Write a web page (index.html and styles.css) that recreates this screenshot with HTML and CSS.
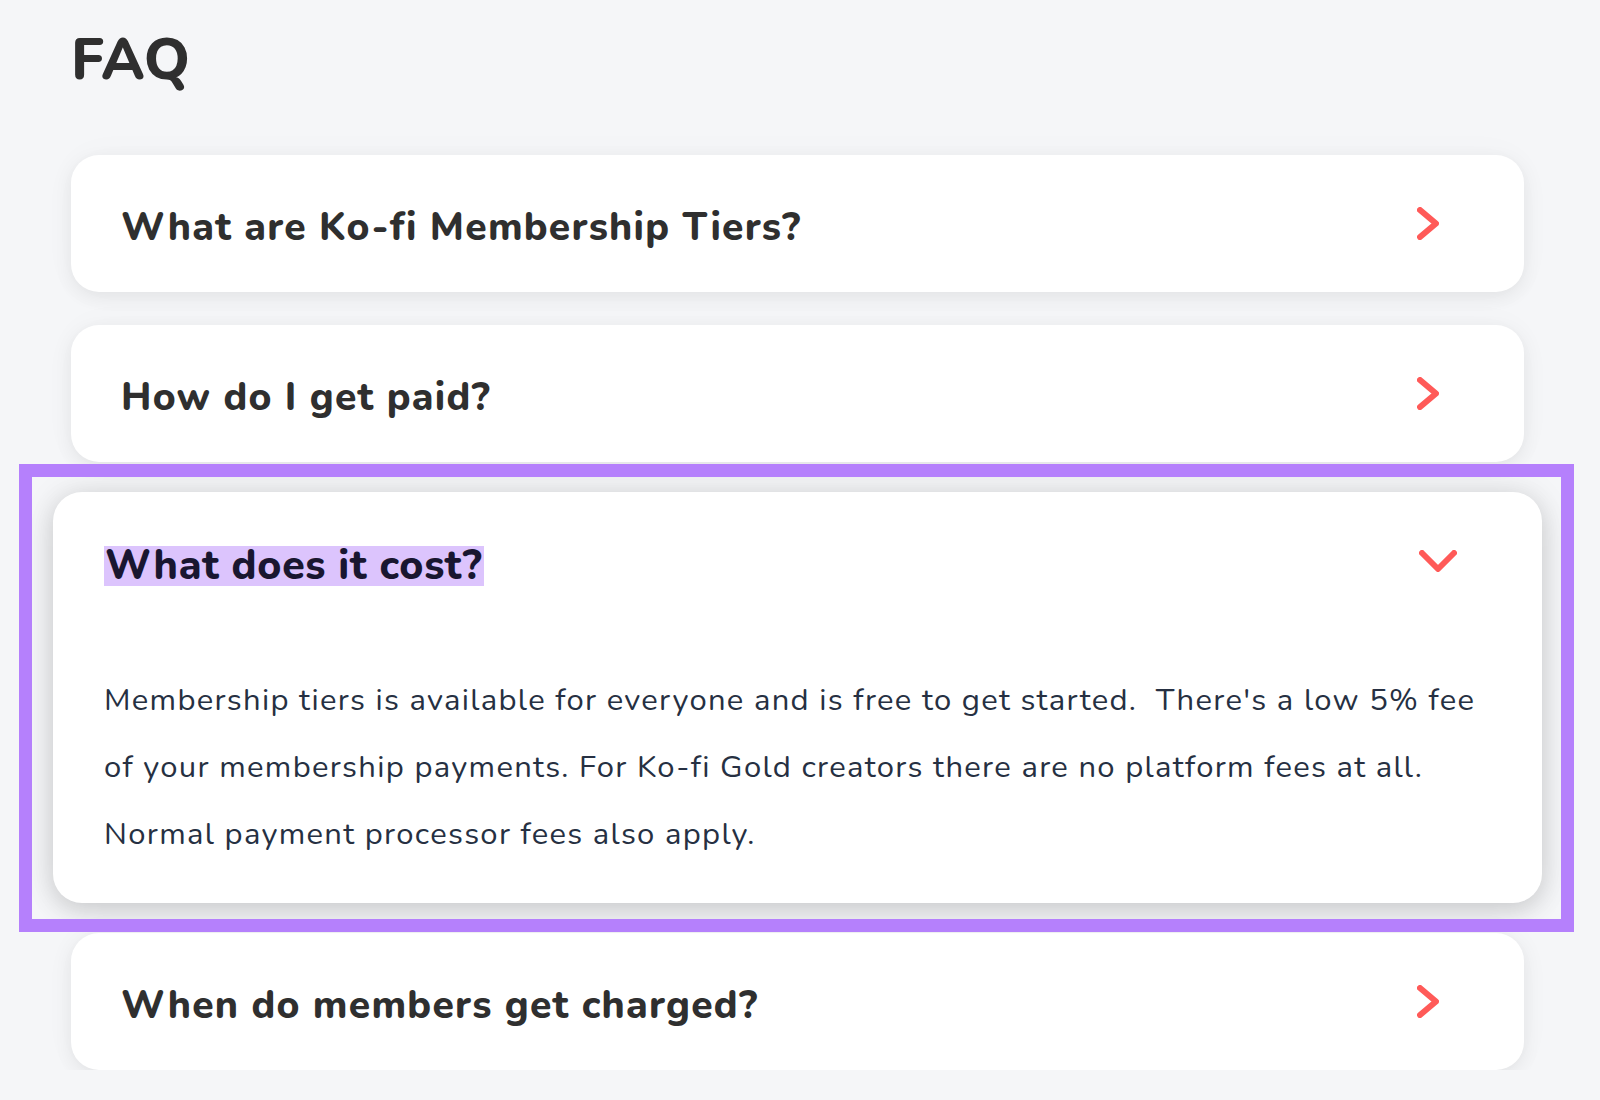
FILE: index.html
```html
<!DOCTYPE html>
<html lang="en">
<head>
<meta charset="utf-8">
<title>FAQ</title>
<link rel="stylesheet" href="styles.css">
</head>
<body>
<main class="page">
  <h1 class="faq-title">FAQ</h1>
  <div class="faq-list">
    <div class="faq-card">
      <span class="faq-q">What are Ko-fi Membership Tiers?</span>
      <svg class="chev-right" width="22" height="33" viewBox="0 0 22 33"><path d="M3 3 L19 16.5 L3 30" fill="none" stroke="#ff5a58" stroke-width="6" stroke-linecap="round" stroke-linejoin="round"/></svg>
    </div>
    <div class="faq-card">
      <span class="faq-q">How do I get paid?</span>
      <svg class="chev-right" width="22" height="33" viewBox="0 0 22 33"><path d="M3 3 L19 16.5 L3 30" fill="none" stroke="#ff5a58" stroke-width="6" stroke-linecap="round" stroke-linejoin="round"/></svg>
    </div>
    <div class="faq-open-wrap">
      <div class="faq-card-open">
        <div class="faq-open-head">
          <span class="faq-q-open">What does it cost?</span>
          <svg class="chev-down" width="38" height="22" viewBox="0 0 38 22"><path d="M3 3 L19 19 L35 3" fill="none" stroke="#ff5a58" stroke-width="6" stroke-linecap="round" stroke-linejoin="round"/></svg>
        </div>
        <p class="faq-answer">Membership tiers is available for everyone and is free to get started.&nbsp; There's a low 5% fee<br>of your membership payments. For Ko-fi Gold creators there are no platform fees at all.<br>Normal payment processor fees also apply.</p>
      </div>
      <div class="select-frame"></div>
    </div>
    <div class="faq-card">
      <span class="faq-q">When do members get charged?</span>
      <svg class="chev-right" width="22" height="33" viewBox="0 0 22 33"><path d="M3 3 L19 16.5 L3 30" fill="none" stroke="#ff5a58" stroke-width="6" stroke-linecap="round" stroke-linejoin="round"/></svg>
    </div>
  </div>
</main>
</body>
</html>
```
FILE: styles.css
```css
html, body {
  margin: 0;
  padding: 0;
  background: #f5f6f8;
}
body {
  font-family: "Nunito", "Lato", "Noto Sans", sans-serif;
  color: #2f2f2f;
}
.page {
  padding: 25px 0 0 71px;
  width: 1453px;
}
.faq-title {
  margin: 0 0 60px 0;
  font-size: 58px;
  line-height: 1.2;
  font-weight: 800;
  color: #2f2f2f;
}
.faq-list {
  display: flex;
  flex-direction: column;
  gap: 33px;
}
.faq-card {
  height: 137px;
  box-sizing: border-box;
  background: #ffffff;
  border-radius: 28px;
  padding: 8px 85px 0 50px;
  display: flex;
  align-items: center;
  justify-content: space-between;
  box-shadow: 0 5px 18px rgba(0, 0, 0, 0.07), 0 0 40px rgba(0, 0, 0, 0.025);
}
.faq-card .chev-right {
  margin-top: -8px;
}
.faq-q {
  font-size: 39px;
  font-weight: 800;
  color: #2f2f2f;
  letter-spacing: 1.25px;
}
.chev-right, .chev-down {
  display: block;
  flex: none;
}
.faq-open-wrap {
  position: relative;
  margin: -3px -18px -3px -18px;
}
.faq-card-open {
  background: #ffffff;
  border-radius: 29px;
  padding: 54px 85px 35px 51px;
  box-shadow: 0 8px 26px rgba(0, 0, 0, 0.13), 0 0 34px rgba(0, 0, 0, 0.09);
}
.faq-open-head {
  display: flex;
  align-items: center;
  justify-content: space-between;
}
.faq-q-open {
  display: inline-block;
  height: 40px;
  line-height: 40px;
  padding: 0 2px 0 1px;
  background: #dcc4fd;
  font-size: 41px;
  font-weight: 800;
  color: #191630;
  letter-spacing: 0.7px;
}
.chev-down {
  margin-bottom: 10px;
}
.faq-answer {
  margin: 81px 0 0 0;
  font-size: 31px;
  line-height: 67px;
  font-weight: 400;
  color: #263042;
  letter-spacing: 1.3px;
  white-space: nowrap;
}
.select-frame {
  position: absolute;
  left: -34px;
  top: -28px;
  right: -32px;
  bottom: -29px;
  border: 13px solid #b580fc;
  pointer-events: none;
}
```
